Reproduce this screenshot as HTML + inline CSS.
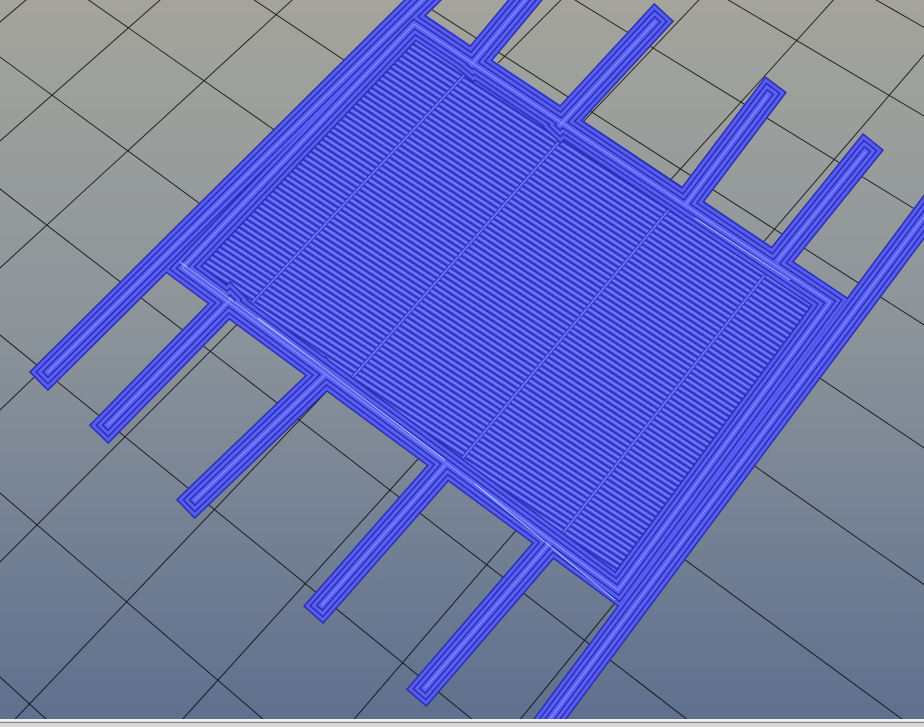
<!DOCTYPE html>
<html><head><meta charset="utf-8"><style>
html,body{margin:0;padding:0;width:924px;height:727px;overflow:hidden;background:#8a929a}
svg{display:block;position:absolute;left:0;top:0}
</style></head><body>
<svg width="924" height="727" viewBox="0 0 924 727" xmlns="http://www.w3.org/2000/svg" overflow="hidden">
<defs>
<linearGradient id="bg" x1="0" y1="0" x2="0" y2="1">
<stop offset="0" stop-color="#a4a49c"/>
<stop offset="0.45" stop-color="#8c949a"/>
<stop offset="1" stop-color="#5e6f8e"/>
</linearGradient>
<pattern id="hatch" patternUnits="userSpaceOnUse" width="20" height="5.4" patternTransform="rotate(33)">
<rect width="20" height="5.4" fill="#535af2"/>
<rect y="0" width="20" height="1.7" fill="#2a2fb2"/>
<rect y="3" width="20" height="0.8" fill="#9094ff"/>
</pattern>
<clipPath id="plateclip"><polygon points="414,7 852,300 622,606 160,268"/></clipPath>
<g id="shapes" fill="none" stroke-linejoin="miter">
<polygon points="414,24 830,302 618,590 182,268"/>
<path d="M48,372 L437,-14"/>
<path d="M538,735 L938,198"/>
<path d="M532,-8 L472,64"/>
<path d="M655,22 L560,125"/>
<path d="M768,95 L685,205"/>
<path d="M865,152 L778,260"/>
<path d="M108,425 L230,300"/>
<path d="M195,500 L325,375"/>
<path d="M322,605 L445,465"/>
<path d="M425,688 L548,545"/>
</g>
</defs>
<rect width="924" height="727" fill="url(#bg)"/>
<g stroke="#000" stroke-width="0.9" opacity="0.85">
<line x1="-3470" y1="-2490" x2="3470" y2="1360"/>
<line x1="-3470" y1="-2490" x2="3470" y2="1486"/>
<line x1="-3470" y1="-2490" x2="3470" y2="1626"/>
<line x1="-3470" y1="-2490" x2="3470" y2="1782"/>
<line x1="-3470" y1="-2490" x2="3470" y2="1956"/>
<line x1="-3470" y1="-2490" x2="3470" y2="2150"/>
<line x1="-3470" y1="-2490" x2="3470" y2="2366"/>
<line x1="-3470" y1="-2490" x2="3470" y2="2604"/>
<line x1="-3470" y1="-2490" x2="3470" y2="2868"/>
<line x1="-3470" y1="-2490" x2="3470" y2="3160"/>
<line x1="-3470" y1="-2490" x2="3470" y2="3476"/>
<line x1="-3470" y1="-2490" x2="3470" y2="3844"/>
<line x1="-3470" y1="-2490" x2="3470" y2="4250"/>
<line x1="-3470" y1="-2490" x2="3470" y2="4690"/>
<line x1="3480" y1="-2925" x2="-3480" y2="2209"/>
<line x1="3480" y1="-2925" x2="-3480" y2="2377"/>
<line x1="3480" y1="-2925" x2="-3480" y2="2573"/>
<line x1="3480" y1="-2925" x2="-3480" y2="2767"/>
<line x1="3480" y1="-2925" x2="-3480" y2="2969"/>
<line x1="3480" y1="-2925" x2="-3480" y2="3207"/>
<line x1="3480" y1="-2925" x2="-3480" y2="3461"/>
<line x1="3480" y1="-2925" x2="-3480" y2="3745"/>
<line x1="3480" y1="-2925" x2="-3480" y2="4049"/>
<line x1="3480" y1="-2925" x2="-3480" y2="4395"/>
<line x1="3480" y1="-2925" x2="-3480" y2="4767"/>
<line x1="3480" y1="-2925" x2="-3480" y2="5189"/>
<line x1="3480" y1="-2925" x2="-3480" y2="5645"/>
</g>
<polygon points="414,7 852,300 622,606 160,268" fill="url(#hatch)"/>
<g clip-path="url(#plateclip)" stroke-width="3.5">
<g stroke="#2a2fb2">
<line x1="484" y1="54" x2="234" y2="322"/>
<line x1="580" y1="118" x2="336" y2="396"/>
<line x1="686" y1="189" x2="446" y2="478"/>
<line x1="782" y1="253" x2="548" y2="552"/>
</g>
<g stroke="#6a70ff" stroke-width="2">
<line x1="484" y1="54" x2="234" y2="322"/>
<line x1="580" y1="118" x2="336" y2="396"/>
<line x1="686" y1="189" x2="446" y2="478"/>
<line x1="782" y1="253" x2="548" y2="552"/>
</g>
</g>
<use href="#shapes" stroke="#2a2fae" stroke-width="27" stroke-linecap="square"/>
<use href="#shapes" stroke="#565cf4" stroke-width="24" stroke-linecap="square"/>
<use href="#shapes" stroke="#2a2fae" stroke-width="18" stroke-linecap="square"/>
<use href="#shapes" stroke="#5a60f6" stroke-width="15" stroke-linecap="square"/>
<use href="#shapes" stroke="#2a2fae" stroke-width="9" stroke-linecap="square"/>
<use href="#shapes" stroke="#5a60f6" stroke-width="6" stroke-linecap="square"/>
<use href="#shapes" stroke="#8c90ff" stroke-width="1" stroke-linecap="square"/>
<g stroke="#bfe0ff" stroke-width="1" opacity="0.8">
<line x1="180" y1="262" x2="320" y2="365"/>
<line x1="258" y1="318" x2="445" y2="460"/>
<line x1="475" y1="484" x2="615" y2="600"/>
<line x1="695" y1="218" x2="790" y2="280"/>
</g>
<rect x="0" y="719" width="924" height="8" fill="#d8d8d8"/>
<rect x="0" y="719" width="924" height="2" fill="#f2f2f2"/>
<rect x="0" y="722" width="924" height="1" fill="#8a8a8a"/>
</svg>
</body></html>
